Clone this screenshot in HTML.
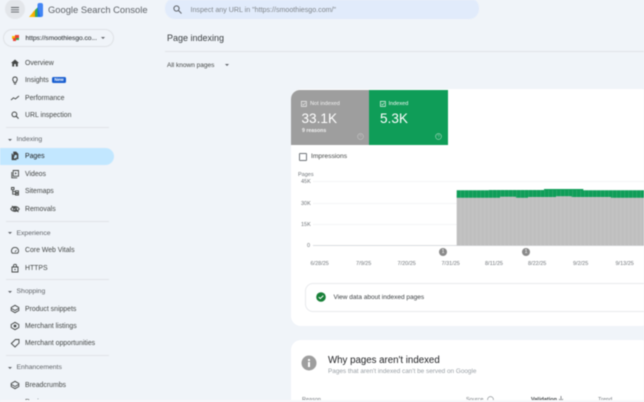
<!DOCTYPE html>
<html><head><meta charset="utf-8"><style>
html,body{margin:0;padding:0}
body{width:644px;height:402px;overflow:hidden;background:#f0f4f9;position:relative;font-family:"Liberation Sans",sans-serif}
#w{position:absolute;left:0;top:0;width:644px;height:402px;overflow:hidden;filter:blur(.4px)}
.t{position:absolute;white-space:nowrap;line-height:10px;height:10px}
.n{left:25px;font-size:6.9px;color:#444746;margin-top:1px}
.s{left:16.5px;font-size:6.8px;color:#5f6368;margin-top:1px}
.l{font-size:5.5px;color:#70757a}
.d{position:absolute;left:6px;width:103px;height:1px;background:#e1e4e8}
.c{position:absolute;left:8px;width:0;height:0;border-left:2.2px solid transparent;border-right:2.2px solid transparent;border-top:2.6px solid #5f6368}
svg.i{position:absolute;left:10px;width:10px;height:10px;overflow:visible}
.b{position:absolute}
</style></head><body><div id="w">

<div class="b" style="left:5px;top:-1px;width:20px;height:20px;border-radius:50%;background:#e3e6ea"></div>
<svg class="b" style="left:10.5px;top:6.5px" width="9" height="6"><path d="M0 .5h8M0 2.8h8M0 5.1h8" stroke="#5f6368" stroke-width=".9"/></svg>
<svg class="b" style="left:29px;top:3px" width="15" height="14"><path d="M0 14l5-6 3 2v4z" fill="#fbbc04"/><path d="M4 14V9l3-3 1 8z" fill="#f9ab00"/><path d="M6 14V7l3-3v10z" fill="#34a853"/><rect x="8.5" y="0" width="5.5" height="14" rx="2" fill="#4285f4"/><path d="M8.5 3v11h3z" fill="#1a73e8"/></svg>
<div class="t" style="left:48px;top:4px;font-size:9.4px;color:#5f6368;height:12px;line-height:12px">Google Search Console</div>

<div class="b" style="left:3px;top:29px;width:109px;height:16px;border:1px solid #dfe2e6;border-radius:9px"></div>
<svg class="b" style="left:12px;top:35px" width="8" height="7"><path d="M0 1h3v3H0z" fill="#fbbc04"/><path d="M3 0h4v3H3z" fill="#ea4335"/><path d="M1 3h3v3H1z" fill="#ea4335"/><path d="M4 3h3v2H4z" fill="#34a853"/></svg>
<div class="t" style="left:25.5px;top:33.5px;font-size:6.6px;color:#3c4043;-webkit-text-stroke:.1px #3c4043">https://smoothiesgo.co...</div>
<div class="c" style="left:101px;top:37px"></div>

<svg class="i" style="top:58px" viewBox="0 0 10 10"><path d="M5 1.5L1 5h1.2v3.5h2V6h1.600v2.500h2V5H9z" fill="#444746"/></svg>
<div class="t n" style="top:58px">Overview</div>
<svg class="i" style="top:75px" viewBox="0 0 10 10"><path d="M3.800 6.600C2 5 2.600 2 5 2s3 3 1.200 4.600v.9H3.800zM4 9h2" fill="none" stroke="#444746" stroke-width=".9"/></svg>
<div class="t n" style="top:75px">Insights</div>
<div class="b" style="left:52px;top:77px;width:14px;height:6px;border-radius:1.5px;background:#1a5fd0;color:#fff;font-size:4.5px;line-height:6px;text-align:center;font-weight:bold">New</div>
<svg class="i" style="top:93px" viewBox="0 0 10 10"><path d="M1 7l2.500-2.200L5.400 6 9 3" fill="none" stroke="#444746" stroke-width=".9"/></svg>
<div class="t n" style="top:93px">Performance</div>
<svg class="i" style="top:110px" viewBox="0 0 10 10"><circle cx="4.400" cy="4.400" r="2.400" fill="none" stroke="#444746"/><path d="M6 6l2.600 2.600" stroke="#444746"/></svg>
<div class="t n" style="top:110px">URL inspection</div>
<div class="d" style="top:127px"></div>

<div class="c" style="top:138.5px"></div>
<div class="t s" style="top:134px">Indexing</div>
<div class="b" style="left:0;top:148px;width:114px;height:17px;border-radius:0 9px 9px 0;background:#c2e7ff"></div>
<svg class="i" style="top:151px" viewBox="0 0 10 10"><path d="M2 2.500v6.300h4.600M3.600 1H6l2 2v4.800H3.600z" fill="#444746" stroke="#444746" stroke-width=".7"/><path d="M4.600 4h2.200v2.800H4.600z" fill="#c2e7ff"/></svg>
<div class="t n" style="top:151px;color:#1f1f1f">Pages</div>
<svg class="i" style="top:169px" viewBox="0 0 10 10"><path d="M1.800 3v5.800h5.400M3.200 1.500h5.300v5.700H3.200z" fill="none" stroke="#444746" stroke-width=".9"/><path d="M5 3.300l2 1-2 1.200z" fill="#444746"/></svg>
<div class="t n" style="top:169px">Videos</div>
<svg class="i" style="top:186px" viewBox="0 0 10 10"><path d="M1.500 1.500h2.500v2.200H1.500zM5.500 4.800h3v1.800h-3zM5.500 7.400h3v1.600h-3zM2.700 3.700v4.500h2.800M2.700 5.600h2.800" fill="none" stroke="#444746" stroke-width=".9"/></svg>
<div class="t n" style="top:186px">Sitemaps</div>
<svg class="i" style="top:203.5px" viewBox="0 0 10 10"><path d="M.8 5C2.600 1.900 7.400 1.900 9.200 5 7.400 8.100 2.600 8.100.8 5z" fill="none" stroke="#444746"/><circle cx="5" cy="5" r="1.600" fill="none" stroke="#444746"/><path d="M2 2l6.500 6" stroke="#444746"/></svg>
<div class="t n" style="top:203.5px">Removals</div>
<div class="d" style="top:220.5px"></div>

<div class="c" style="top:232px"></div>
<div class="t s" style="top:227.5px">Experience</div>
<svg class="i" style="top:245px" viewBox="0 0 10 10"><path d="M2.300 8.200h5.400C9.600 5.700 8 2.400 5 2.400S.4 5.700 2.300 8.200z" fill="none" stroke="#444746" stroke-width=".9"/><path d="M4.500 6.500L7 4.400 5.600 7z" fill="#444746"/></svg>
<div class="t n" style="top:245px">Core Web Vitals</div>
<svg class="i" style="top:262.5px" viewBox="0 0 10 10"><path d="M2 4h6v5H2zM3.500 4V2.600c0-1.700 3-1.700 3 0V4" fill="none" stroke="#444746" stroke-width=".9"/><circle cx="5" cy="6.500" r=".7" fill="#444746"/></svg>
<div class="t n" style="top:262.5px">HTTPS</div>
<div class="d" style="top:279px"></div>

<div class="c" style="top:290.5px"></div>
<div class="t s" style="top:286px">Shopping</div>
<svg class="i" style="top:303.5px" viewBox="0 0 10 10"><path d="M5 1.300l3.800 2.200v3L5 8.700l-3.800-2.200v-3z" fill="none" stroke="#444746" stroke-width=".9"/><path d="M1.500 4.500L5 6.500l3.500-2" fill="none" stroke="#444746" stroke-width=".8"/></svg>
<div class="t n" style="top:303.5px">Product snippets</div>
<svg class="i" style="top:321px" viewBox="0 0 10 10"><path d="M5 1.300l3.800 2.200v3L5 8.700l-3.800-2.200v-3z" fill="none" stroke="#444746" stroke-width=".9"/><circle cx="5" cy="5" r="1.400" fill="#444746"/></svg>
<div class="t n" style="top:321px">Merchant listings</div>
<svg class="i" style="top:338px" viewBox="0 0 10 10"><path d="M1.300 5.500L5.500 1.500H9v3.600L5 9z" fill="none" stroke="#444746" stroke-width=".9"/></svg>
<div class="t n" style="top:338px">Merchant opportunities</div>
<div class="d" style="top:355px"></div>

<div class="c" style="top:366.5px"></div>
<div class="t s" style="top:362px">Enhancements</div>
<svg class="i" style="top:379.5px" viewBox="0 0 10 10"><path d="M5 1.300l3.800 2.200v3L5 8.700l-3.800-2.200v-3z" fill="none" stroke="#444746" stroke-width=".9"/><path d="M1.500 4.500L5 6.500l3.500-2" fill="none" stroke="#444746" stroke-width=".8"/></svg>
<div class="t n" style="top:379.5px">Breadcrumbs</div>
<div class="t n" style="top:396.5px">Review</div>

<div class="b" style="left:165px;top:-2px;width:314px;height:21px;border-radius:10px;background:#e1ebfb"></div>
<svg class="b" style="left:173px;top:5px" width="9" height="9"><circle cx="3.500" cy="3.500" r="2.600" fill="none" stroke="#5f6368"/><path d="M5.500 5.500l3 3" stroke="#5f6368"/></svg>
<div class="t" style="left:190.5px;top:4.5px;font-size:7.1px;color:#80868b">Inspect any URL in "https://smoothiesgo.com/"</div>

<div class="t" style="left:167px;top:32px;font-size:9px;color:#3c4043;height:12px;line-height:12px">Page indexing</div>
<div class="b" style="left:165px;top:51px;width:479px;height:1px;background:#e1e4e8"></div>
<div class="t" style="left:167px;top:60.5px;font-size:6.5px;color:#444746">All known pages</div>
<div class="c" style="left:224.5px;top:64px"></div>

<div class="b" style="left:291px;top:89px;width:360px;height:237px;background:#fff;border-radius:10px"></div>
<div class="b" style="left:291px;top:89.5px;width:78px;height:55.500px;background:#9e9e9e;border-radius:9px 0 0 0"></div>
<div class="b" style="left:369px;top:89.5px;width:79px;height:55.500px;background:#0f9d58"></div>

<svg class="b" style="left:301px;top:100.5px" width="6" height="6"><path d="M.4.400h5v5h-5z" fill="none" stroke="#eee" stroke-width=".7"/><path d="M1.500 3l1 1 2-2.200" fill="none" stroke="#eee" stroke-width=".6"/></svg>
<div class="t" style="left:310px;top:98.5px;font-size:5.6px;color:#f1f1f1">Not indexed</div>
<div class="t" style="left:301.5px;top:111px;font-size:13.6px;color:#fff;height:16px;line-height:16px">33.1K</div>
<div class="t" style="left:302px;top:126px;font-size:5.2px;color:#f1f1f1;font-weight:bold">9 reasons</div>
<svg class="b" style="left:357px;top:132.5px" width="7" height="7"><circle cx="3.500" cy="3.500" r="2.900" fill="none" stroke="#c4c4c4" stroke-width=".6"/><path d="M2.600 2.800c0-1.200 1.800-1.200 1.800 0 0 .8-.9.7-.9 1.500" fill="none" stroke="#c4c4c4" stroke-width=".5"/></svg>

<svg class="b" style="left:380px;top:100.5px" width="6" height="6"><path d="M.4.400h5v5h-5z" fill="none" stroke="#e6f4ea" stroke-width=".7"/><path d="M1.500 3l1 1 2-2.200" fill="none" stroke="#e6f4ea" stroke-width=".6"/></svg>
<div class="t" style="left:388.5px;top:98.5px;font-size:5.6px;color:#f1f8f4">Indexed</div>
<div class="t" style="left:380px;top:111px;font-size:13.6px;color:#fff;height:16px;line-height:16px">5.3K</div>
<svg class="b" style="left:435px;top:132.5px" width="7" height="7"><circle cx="3.500" cy="3.500" r="2.900" fill="none" stroke="#a8d8bd" stroke-width=".6"/><path d="M2.600 2.800c0-1.200 1.800-1.200 1.800 0 0 .8-.9.7-.9 1.500" fill="none" stroke="#a8d8bd" stroke-width=".5"/></svg>

<div class="b" style="left:298.5px;top:152.5px;width:6.500px;height:6.500px;border:1px solid #70757a;border-radius:1px"></div>
<div class="t" style="left:311px;top:151.5px;font-size:6.700px;color:#444746">Impressions</div>

<div class="t l" style="left:298px;top:169.5px">Pages</div>
<div class="t l" style="left:301px;top:176.5px">45K</div>
<div class="t l" style="left:301px;top:198.5px">30K</div>
<div class="t l" style="left:301px;top:219.5px">15K</div>
<div class="t l" style="left:307px;top:240.5px">0</div>

<svg class="b" style="left:313px;top:180px" width="331" height="67">
<path d="M0 1.500h331M0 23.500h331M0 44.500h331" stroke="#f4f5f6" stroke-width="1"/>
<path d="M0 65.500h331" stroke="#dadce0" stroke-width="1"/>
<rect x="143.700" y="15" width="187.300" height="50.500" fill="#bfbfbf"/>
<path d="M143.700 10.300H175.700V10H231V9H270.300V10.200H331V17.700H298V17H258.700V16.300H243V17H215V17.700H203V16.800H187V17.700H143.700Z" fill="#0f9d58"/>
<path d="M147.700 10v55.500M151.700 10v55.500M155.700 10v55.500M159.700 10v55.500M163.700 10v55.500M167.700 10v55.500M171.700 10v55.500M175.700 10v55.500M179.700 10v55.500M183.700 10v55.500M187.700 10v55.500M191.700 10v55.500M195.700 10v55.500M199.700 10v55.500M203.700 10v55.500M207.700 10v55.500M211.700 10v55.500M215.700 10v55.500M219.700 10v55.500M223.700 10v55.500M227.700 10v55.500M231.700 10v55.500M235.700 10v55.500M239.700 10v55.500M243.700 10v55.500M247.700 10v55.500M251.700 10v55.500M255.700 10v55.500M259.700 10v55.500M263.700 10v55.500M267.700 10v55.500M271.700 10v55.500M275.700 10v55.500M279.700 10v55.500M283.700 10v55.500M287.700 10v55.500M291.700 10v55.500M295.700 10v55.500M299.700 10v55.500M303.700 10v55.500M307.700 10v55.500M311.700 10v55.500M315.700 10v55.500M319.700 10v55.500M323.700 10v55.500M327.700 10v55.500" stroke="#fff" stroke-opacity=".18" stroke-width=".6"/>
</svg>

<div class="b" style="left:439px;top:248px;width:8px;height:8px;border-radius:50%;background:#8a8a8a;color:#fff;font-size:5px;line-height:8px;text-align:center">1</div>
<div class="b" style="left:522px;top:248px;width:8px;height:8px;border-radius:50%;background:#8a8a8a;color:#fff;font-size:5px;line-height:8px;text-align:center">1</div>

<div class="t l" style="left:310.5px;top:258.5px">6/28/25</div>
<div class="t l" style="left:356px;top:258.5px">7/9/25</div>
<div class="t l" style="left:397.5px;top:258.5px">7/20/25</div>
<div class="t l" style="left:441.5px;top:258.5px">7/31/25</div>
<div class="t l" style="left:485px;top:258.5px">8/11/25</div>
<div class="t l" style="left:528px;top:258.5px">8/22/25</div>
<div class="t l" style="left:573px;top:258.5px">9/2/25</div>
<div class="t l" style="left:615.5px;top:258.5px">9/13/25</div>

<div class="b" style="left:305px;top:283px;width:360px;height:27px;border:1px solid #e8eaed;border-radius:8px"></div>
<svg class="b" style="left:316px;top:292px" width="10" height="10"><circle cx="5" cy="5" r="4.800" fill="#188038"/><path d="M2.800 5.100l1.500 1.500 3-3" fill="none" stroke="#fff" stroke-width="1"/></svg>
<div class="t" style="left:333.5px;top:292.5px;font-size:6.500px;color:#3c4043">View data about indexed pages</div>

<div class="b" style="left:291px;top:339.5px;width:360px;height:80px;background:#fff;border-radius:10px"></div>
<svg class="b" style="left:301px;top:355px" width="16" height="16"><circle cx="8" cy="8" r="7.500" fill="#9e9e9e"/><path d="M7 7h2v5H7zM7 4h2v2H7z" fill="#fff"/></svg>
<div class="t" style="left:328px;top:353.5px;font-size:9.700px;color:#202124;height:13px;line-height:13px">Why pages aren't indexed</div>
<div class="t" style="left:328px;top:367px;font-size:6.400px;color:#9aa0a6">Pages that aren't indexed can't be served on Google</div>

<div class="t l" style="left:302px;top:394.5px">Reason</div>
<div class="t l" style="left:466px;top:394.5px">Source</div>
<svg class="b" style="left:487px;top:395.5px" width="7" height="7"><circle cx="3.500" cy="3.500" r="2.900" fill="none" stroke="#80868b" stroke-width=".6"/></svg>
<div class="t l" style="left:531px;top:394.5px;color:#3c4043;font-weight:bold">Validation</div>
<svg class="b" style="left:558px;top:396px" width="6" height="6"><path d="M3 0v5M1 3l2 2 2-2" fill="none" stroke="#5f6368" stroke-width=".7"/></svg>
<div class="t l" style="left:598px;top:394.5px">Trend</div>

<div class="b" style="left:0;top:400px;width:644px;height:2px;background:#f7f8fa"></div>
</div></body></html>
